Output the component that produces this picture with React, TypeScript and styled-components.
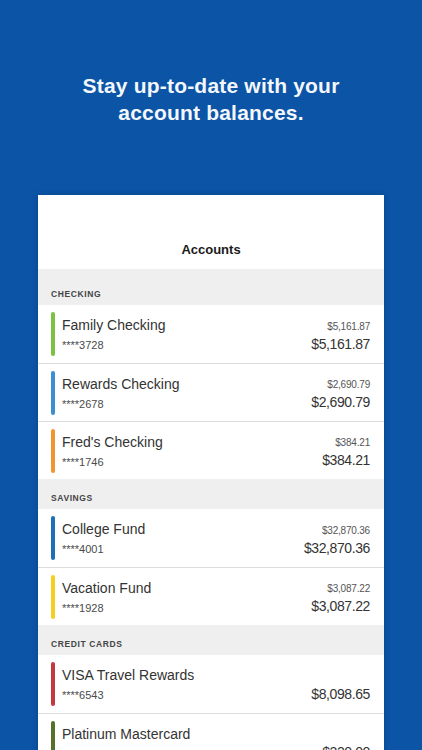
import React from "react";
import styled, { createGlobalStyle } from "styled-components";

const Global = createGlobalStyle`
  html, body {
    margin: 0;
    padding: 0;
    background: #0b54a6;
  }
  body {
    height: 750px;
    overflow: hidden;
    font-family: "Liberation Sans", Arial, sans-serif;
  }
`;

const Page = styled.div`
  display: flex;
  flex-direction: column;
  align-items: center;
  height: 750px;
  overflow: hidden;
  background: #0b54a6;
`;

const Headline = styled.h1`
  margin: 0;
  padding-top: 72px;
  font-size: 21px;
  line-height: 27px;
  font-weight: 700;
  letter-spacing: 0.2px;
  color: #f4f7fb;
  text-align: center;
`;

const Card = styled.div`
  margin-top: 69px;
  width: 346px;
  background: #ffffff;
  box-shadow: 0 0 6px rgba(0, 0, 0, 0.18);
  flex-shrink: 0;
`;

const NavBar = styled.div`
  padding: 47px 0 11px;
  text-align: center;
  font-size: 13px;
  line-height: 16px;
  font-weight: 700;
  color: #1a1a1a;
`;

const SectionHeader = styled.div<{ $first?: boolean }>`
  background: #efeff0;
  padding: ${(p) => (p.$first ? "20px" : "14px")} 14px 6px 13px;
  font-size: 8.5px;
  line-height: 10px;
  font-weight: 700;
  letter-spacing: 0.6px;
  color: #444;
  text-transform: uppercase;
`;

const Row = styled.div`
  display: flex;
  height: 58px;
  box-sizing: border-box;
  padding: 0 14px 0 13px;
  background: #fff;
  & + & {
    border-top: 1px solid #dcdcdc;
  }
`;

const Bar = styled.div<{ $color: string }>`
  width: 4px;
  height: 44px;
  margin-top: 7px;
  border-radius: 2px;
  background: ${(p) => p.$color};
  flex-shrink: 0;
`;

const Info = styled.div`
  display: flex;
  flex-direction: column;
  padding-top: 12px;
  margin-left: 7px;
`;

const Name = styled.div`
  font-size: 14px;
  line-height: 17px;
  color: #333;
  white-space: nowrap;
`;

const Masked = styled.div`
  margin-top: 5px;
  font-size: 11px;
  line-height: 13px;
  color: #4a4a4a;
`;

const Amounts = styled.div`
  margin-left: auto;
  display: flex;
  flex-direction: column;
  align-items: flex-end;
  justify-content: flex-end;
  padding-bottom: 10px;
`;

const SmallAmount = styled.div`
  font-size: 10px;
  line-height: 12px;
  letter-spacing: -0.2px;
  color: #555;
  margin-bottom: 3px;
`;

const BigAmount = styled.div`
  font-size: 14px;
  line-height: 17px;
  letter-spacing: -0.4px;
  color: #333;
`;

type Account = {
  name: string;
  mask: string;
  color: string;
  available?: string;
  balance: string;
};

type Section = { title: string; accounts: Account[] };

const sections: Section[] = [
  {
    title: "Checking",
    accounts: [
      { name: "Family Checking", mask: "****3728", color: "#7dc142", available: "$5,161.87", balance: "$5,161.87" },
      { name: "Rewards Checking", mask: "****2678", color: "#3d8fd1", available: "$2,690.79", balance: "$2,690.79" },
      { name: "Fred's Checking", mask: "****1746", color: "#f0962e", available: "$384.21", balance: "$384.21" },
    ],
  },
  {
    title: "Savings",
    accounts: [
      { name: "College Fund", mask: "****4001", color: "#1d6fb8", available: "$32,870.36", balance: "$32,870.36" },
      { name: "Vacation Fund", mask: "****1928", color: "#f5cf1f", available: "$3,087.22", balance: "$3,087.22" },
    ],
  },
  {
    title: "Credit Cards",
    accounts: [
      { name: "VISA Travel Rewards", mask: "****6543", color: "#c2393e", balance: "$8,098.65" },
      { name: "Platinum Mastercard", mask: "****8231", color: "#56712a", balance: "$220.00" },
    ],
  },
];

export default function App() {
  return (
    <>
      <Global />
      <Page>
        <Headline>
          Stay up-to-date with your
          <br />
          account balances.
        </Headline>
        <Card>
          <NavBar>Accounts</NavBar>
          {sections.map((s, i) => (
            <div key={s.title}>
              <SectionHeader $first={i === 0}>{s.title}</SectionHeader>
              {s.accounts.map((a) => (
                <Row key={a.name}>
                  <Bar $color={a.color} />
                  <Info>
                    <Name>{a.name}</Name>
                    <Masked>{a.mask}</Masked>
                  </Info>
                  <Amounts>
                    {a.available && <SmallAmount>{a.available}</SmallAmount>}
                    <BigAmount>{a.balance}</BigAmount>
                  </Amounts>
                </Row>
              ))}
            </div>
          ))}
        </Card>
      </Page>
    </>
  );
}
